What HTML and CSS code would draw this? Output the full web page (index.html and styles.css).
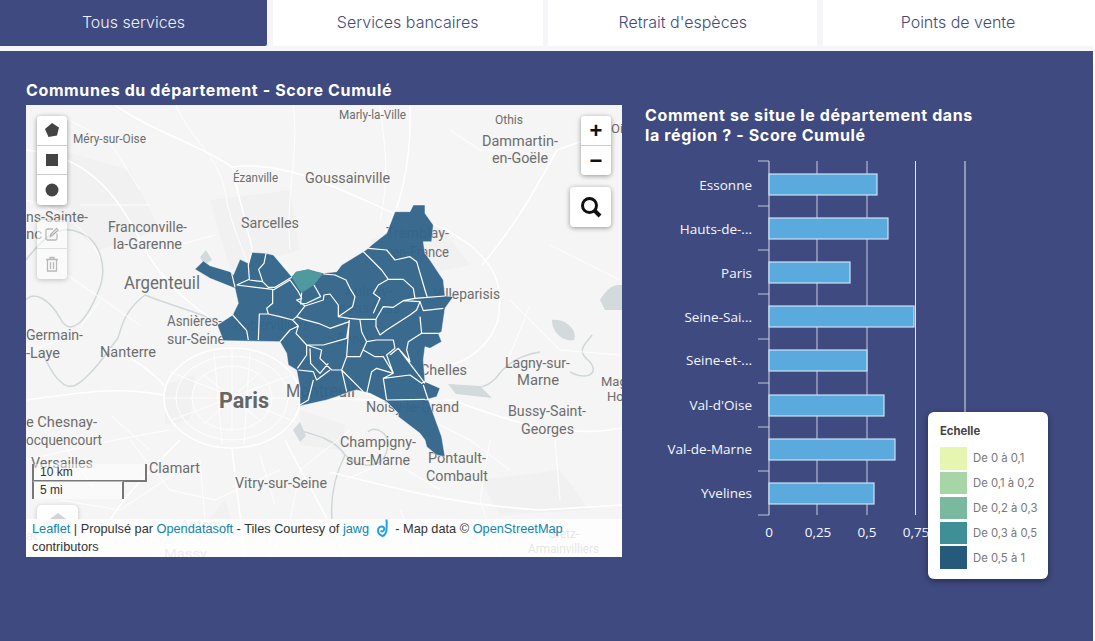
FILE: index.html
```html
<!DOCTYPE html>
<html lang="fr">
<head>
    <meta charset="UTF-8">
    <meta name="viewport" content="width=device-width, initial-scale=1.0">
    <title>Communes du département - Score Cumulé</title>
    <link rel="stylesheet" href="styles.css">
</head>
<body>
    <div class="page">
        <nav class="tabs">
            <a class="tab tab-active">Tous services</a>
            <a class="tab">Services bancaires</a>
            <a class="tab">Retrait d'espèces</a>
            <a class="tab">Points de vente</a>
        </nav>

        <main class="content">
            <section class="map-col">
                <h2 class="title">Communes du département - Score Cumulé</h2>
                <div class="map">
                    <svg class="map-canvas" viewBox="26 105 596 452" width="596" height="452">
                        <!-- zones plus sombres -->
                        <g class="patch">
                            <path d="M60,150 L130,170 L160,230 L100,250 L50,210 Z"/>
                            <path d="M210,200 L290,190 L300,250 L230,270 Z"/>
                            <path d="M370,240 L440,225 L470,265 L400,280 Z"/>
                            <path d="M300,410 L345,425 L340,450 L300,445 Z"/>
                            <path d="M165,385 L195,375 L190,420 L165,425 Z"/>
                            <path d="M480,480 L560,470 L590,510 L500,515 Z"/>
                            <path d="M200,530 L225,500 L240,550 L210,552 Z"/>
                        </g>
                        <!-- eau -->
                        <g class="water">
                            <path d="M26,260 C45,235 60,225 78,232 C102,240 108,270 98,292 C86,322 70,338 60,318 C50,300 34,290 26,300"/>
                            <path d="M145,295 C125,310 122,325 118,338 C105,355 92,375 76,385 C62,392 50,370 42,352"/>
                            <path d="M145,295 C170,305 190,310 215,320"/>
                            <path d="M298,430 C320,436 335,440 345,455 C362,470 385,470 388,445 C388,430 372,426 368,432"/>
                            <path d="M345,455 C335,475 330,495 332,520"/>
                            <path d="M452,385 C470,390 485,390 496,378 C505,365 520,355 540,352"/>
                            <path d="M592,335 C585,345 575,350 590,362 C600,375 585,380 570,372"/>
                        </g>
                        <g class="lake">
                            <path d="M552,320 C565,318 578,330 574,340 C562,342 552,332 552,320 Z"/>
                            <path d="M600,300 C610,283 618,285 622,285 L622,310 L605,310 Z"/>
                            <path d="M448,384 L480,386 L492,398 L456,394 Z"/>
                            <path d="M200,257 L206,250 L212,260 L204,265 Z"/>
                            <path d="M293,430 L300,422 L306,436 L300,442 Z"/>
                        </g>
                        <!-- routes -->
                        <g class="road-main">
                            <ellipse cx="232" cy="398" rx="68" ry="50"/>
                            <path d="M26,150 C90,155 120,200 140,240 C160,280 185,300 215,322"/>
                            <path d="M115,105 C150,130 200,145 232,167 C290,160 340,190 420,225"/>
                            <path d="M232,167 C240,205 255,250 262,300"/>
                            <path d="M410,105 C412,160 400,215 380,240 L330,320 L322,350"/>
                            <path d="M420,225 C435,220 450,232 470,245 C490,262 505,280 498,320 C490,345 470,360 450,365"/>
                            <path d="M482,265 C520,220 540,180 557,150 L600,135 L622,120"/>
                            <path d="M452,400 C500,418 560,440 622,428"/>
                            <path d="M26,400 C70,395 110,385 164,395"/>
                            <path d="M100,345 C130,355 150,370 164,385"/>
                            <path d="M300,400 C345,395 390,405 452,400"/>
                            <path d="M285,440 C305,480 325,510 345,557"/>
                            <path d="M180,440 C140,480 110,510 90,557"/>
                            <path d="M232,448 C235,480 240,510 245,557"/>
                            <path d="M330,472 C400,490 460,505 540,510 L622,505"/>
                        </g>
                        <g class="road">
                            <ellipse cx="232" cy="398" rx="40" ry="32"/>
                            <ellipse cx="232" cy="398" rx="56" ry="42"/>
                            <path d="M232,366 L232,430 M192,398 L272,398 M204,375 L262,422 M260,372 L204,424 M214,352 L222,444 M250,352 L244,444 M170,372 L296,422 M172,420 L294,374"/>
                            <path d="M164,398 L192,398 M272,398 L300,398 M232,348 L232,366"/>
                            <path d="M176,105 C190,140 215,150 225,190 C230,225 240,240 250,270"/>
                            <path d="M293,105 C300,150 285,195 290,250"/>
                            <path d="M60,115 L110,142 L140,190 M26,200 C60,210 85,225 100,258"/>
                            <path d="M60,270 L140,325 M26,352 L75,335 L100,300"/>
                            <path d="M380,105 C385,150 390,175 380,220"/>
                            <path d="M450,130 L480,150 L520,150 M550,245 L620,280"/>
                            <path d="M510,300 L560,350 L620,355 M530,305 L508,360"/>
                            <path d="M490,440 L480,500 L500,557 M555,440 L560,500"/>
                            <path d="M26,460 C70,450 110,440 170,430 M60,500 L120,510 L180,470"/>
                            <path d="M300,470 L290,520 L270,557 M345,480 L390,460 L440,490"/>
                            <path d="M400,510 L420,557 M140,520 L160,557 M26,520 L100,540"/>
                            <path d="M130,440 L170,490 L215,500 L280,470 M200,460 L205,520 M260,455 L275,505 M110,415 L150,450 M60,440 L95,490"/>
                            <path d="M310,350 L345,375 L375,365 M430,420 L470,440 L510,470 M350,430 L300,470 M160,250 L215,235 M80,205 L150,205"/>
                        </g>

                        <!-- villes -->
                        <g class="city">
                            <text x="339" y="119" textLength="67" lengthAdjust="spacingAndGlyphs" class="sm">Marly-la-Ville</text>
                            <text x="495" y="124" textLength="28" lengthAdjust="spacingAndGlyphs" class="sm">Othis</text>
                            <text x="482" y="146" textLength="76" lengthAdjust="spacingAndGlyphs">Dammartin-</text>
                            <text x="492" y="163" textLength="56" lengthAdjust="spacingAndGlyphs">en-Goële</text>
                            <text x="611" y="133" class="sm">Oi</text>
                            <text x="73" y="143" textLength="73" lengthAdjust="spacingAndGlyphs" class="sm">Méry-sur-Oise</text>
                            <text x="233" y="182" textLength="45" lengthAdjust="spacingAndGlyphs" class="sm">Ézanville</text>
                            <text x="305" y="183" textLength="85" lengthAdjust="spacingAndGlyphs">Goussainville</text>
                            <text x="26" y="222" textLength="62" lengthAdjust="spacingAndGlyphs">ns-Sainte-</text>
                            <text x="26" y="239">nc</text>
                            <text x="108" y="232" textLength="79" lengthAdjust="spacingAndGlyphs">Franconville-</text>
                            <text x="113" y="249" textLength="69" lengthAdjust="spacingAndGlyphs">la-Garenne</text>
                            <text x="241" y="228" textLength="58" lengthAdjust="spacingAndGlyphs">Sarcelles</text>
                            <text x="124" y="289" textLength="76" lengthAdjust="spacingAndGlyphs" class="lg">Argenteuil</text>
                            <text x="386" y="238" textLength="63" lengthAdjust="spacingAndGlyphs">Tremblay-</text>
                            <text x="392" y="257" textLength="57" lengthAdjust="spacingAndGlyphs">en-France</text>
                            <text x="345" y="296" textLength="47" lengthAdjust="spacingAndGlyphs">Aulnay-</text>
                            <text x="339" y="313" textLength="61" lengthAdjust="spacingAndGlyphs">sous-Bois</text>
                            <text x="433" y="299" textLength="67" lengthAdjust="spacingAndGlyphs">Villeparisis</text>
                            <text x="167" y="326" textLength="55" lengthAdjust="spacingAndGlyphs">Asnières-</text>
                            <text x="167" y="344" textLength="58" lengthAdjust="spacingAndGlyphs">sur-Seine</text>
                            <text x="233" y="330" textLength="77" lengthAdjust="spacingAndGlyphs">Aubervilliers</text>
                            <text x="26" y="340" textLength="57" lengthAdjust="spacingAndGlyphs">Germain-</text>
                            <text x="26" y="358" textLength="34" lengthAdjust="spacingAndGlyphs">-Laye</text>
                            <text x="100" y="357" textLength="56" lengthAdjust="spacingAndGlyphs">Nanterre</text>
                            <text x="337" y="344" textLength="35" lengthAdjust="spacingAndGlyphs">Bondy</text>
                            <text x="420" y="375" textLength="47" lengthAdjust="spacingAndGlyphs">Chelles</text>
                            <text x="505" y="368" textLength="65" lengthAdjust="spacingAndGlyphs">Lagny-sur-</text>
                            <text x="517" y="385" textLength="42" lengthAdjust="spacingAndGlyphs">Marne</text>
                            <text x="601" y="386" class="sm">Mag</text>
                            <text x="607" y="401" class="sm">Ho</text>
                            <text x="219" y="408" textLength="50" lengthAdjust="spacingAndGlyphs" class="capital">Paris</text>
                            <text x="286" y="397" textLength="69" lengthAdjust="spacingAndGlyphs" class="lg">Montreuil</text>
                            <text x="366" y="412" textLength="93" lengthAdjust="spacingAndGlyphs">Noisy-le-Grand</text>
                            <text x="508" y="416" textLength="78" lengthAdjust="spacingAndGlyphs">Bussy-Saint-</text>
                            <text x="521" y="434" textLength="53" lengthAdjust="spacingAndGlyphs">Georges</text>
                            <text x="26" y="427" textLength="71" lengthAdjust="spacingAndGlyphs">e Chesnay-</text>
                            <text x="26" y="445" textLength="76" lengthAdjust="spacingAndGlyphs">ocquencourt</text>
                            <text x="340" y="447" textLength="76" lengthAdjust="spacingAndGlyphs">Champigny-</text>
                            <text x="346" y="465" textLength="64" lengthAdjust="spacingAndGlyphs">sur-Marne</text>
                            <text x="428" y="463" textLength="58" lengthAdjust="spacingAndGlyphs">Pontault-</text>
                            <text x="426" y="481" textLength="62" lengthAdjust="spacingAndGlyphs">Combault</text>
                            <text x="31" y="468" textLength="62" lengthAdjust="spacingAndGlyphs">Versailles</text>
                            <text x="149" y="473" textLength="51" lengthAdjust="spacingAndGlyphs">Clamart</text>
                            <text x="235" y="488" textLength="92" lengthAdjust="spacingAndGlyphs">Vitry-sur-Seine</text>
                            <text x="180" y="529" textLength="44" lengthAdjust="spacingAndGlyphs" class="faint">Antony</text>
                            <text x="26" y="540" class="faint">ac</text>
                            <text x="164" y="558" textLength="43" lengthAdjust="spacingAndGlyphs" class="faint">Massy</text>
                            <text x="548" y="538" textLength="31" lengthAdjust="spacingAndGlyphs" class="sm">Gretz-</text>
                            <text x="528" y="553" textLength="71" lengthAdjust="spacingAndGlyphs" class="sm">Armainvilliers</text>
                        </g>

                        <!-- communes, tracées à 3x -->
                        <g transform="translate(190,200) scale(0.3333)">
                            <path class="dept" d="M15,208 L40,183 L60,197 L120,215 L130,225 L150,178 L175,190 L185,157 L228,160 L250,165 L305,230 L318,215 L355,208 L400,220 L440,215 L455,195 L520,155 L535,145 L545,135 L590,100 L615,35 L660,35 L670,15 L705,15 L705,40 L730,75 L725,125 L700,125 L705,160 L720,180 L760,240 L765,288 L790,290 L765,325 L755,395 L745,400 L755,425 L720,445 L705,440 L700,480 L705,545 L750,565 L740,590 L705,600 L715,600 L755,710 L765,770 L740,765 L710,740 L705,720 L690,700 L625,650 L625,640 L590,605 L540,580 L500,570 L480,575 L440,590 L410,600 L330,618 L330,565 L320,510 L295,495 L290,460 L270,425 L100,422 L82,375 L128,345 L145,310 L135,265 L60,235 Z"/>
                            <path class="teal" d="M305,232 L318,215 L355,208 L372,215 L400,220 L372,255 L335,278 L325,265 Z"/>
                            <path class="limits" d="M135,262 L125,220 M140,255 L178,238 L175,195 L185,157 M228,160 L222,190 L206,208 L218,245 L178,240 M218,245 L235,262 L255,262 L305,232 M140,255 L248,268 L248,310 L230,325 L235,342 L208,342 L205,420 M250,270 L300,240 L325,275 L335,295 L320,300 L345,318 L320,350 L308,360 L270,350 L235,342 M128,345 L170,392 L175,420 M308,360 L325,378 L300,390 L270,425 M325,378 L318,400 L350,435 L350,465 L322,505 M350,435 L400,435 L470,415 L478,365 M320,350 L340,358 L385,370 L420,385 L478,365 M345,318 L400,300 L402,285 L420,282 L445,315 L445,350 L478,355 M372,255 L392,290 L350,310 L332,312 L335,278 M400,222 L435,225 L468,240 L480,265 L495,290 L488,320 L445,350 M520,155 L575,210 L595,238 M535,145 L590,150 L615,180 L660,170 L680,185 L705,270 L712,292 M595,238 L640,238 L670,265 L675,295 L640,302 L610,322 L580,320 L565,345 L558,358 L510,358 L478,355 M595,238 L565,255 L550,280 L570,295 L550,340 M675,295 L712,292 L765,288 M690,305 L700,332 L760,325 M640,302 L690,305 L680,330 L660,345 L590,390 L570,405 L558,380 L558,358 M690,350 L695,400 L745,400 M695,400 L655,425 L650,450 L660,485 L625,445 L600,465 M510,360 L515,395 L530,425 L510,470 L470,470 L478,360 M470,470 L455,510 L520,575 M530,425 L560,420 L610,420 L615,445 L590,465 L610,520 M520,450 L555,470 L580,470 L610,520 L560,505 L545,515 L530,580 M455,510 L425,510 L390,475 L395,450 L350,435 M455,510 L470,575 M420,510 L380,540 L370,515 L325,510 M360,445 L362,490 L390,520 L415,490 M370,540 L355,600 L330,615 M610,520 L580,535 L590,600 M580,535 L660,525 L695,550 L705,545 M625,445 L705,550 M590,600 L705,598 M700,555 L715,600 M530,580 L575,600"/>
                        </g>
                    </svg>

                    <div class="rail-left">
                        <div class="ctrl">
                            <button class="ctrl-btn">
                                <svg width="16" height="16" viewBox="0 0 16 16"><path class="ico" d="M8,1 L15,5.5 L13,13.5 L4.5,15 L1,7 Z"/></svg>
                            </button>
                            <button class="ctrl-btn">
                                <svg width="16" height="16" viewBox="0 0 16 16"><rect class="ico" x="2" y="2" width="12" height="12"/></svg>
                            </button>
                            <button class="ctrl-btn">
                                <svg width="16" height="16" viewBox="0 0 16 16"><circle class="ico" cx="8" cy="8" r="6.5"/></svg>
                            </button>
                        </div>
                        <div class="ctrl ctrl-off">
                            <button class="ctrl-btn">
                                <svg width="16" height="16" viewBox="0 0 16 16"><path class="ico-line" d="M9,3 L3.5,3 Q2,3 2,4.5 L2,12.5 Q2,14 3.5,14 L11.5,14 Q13,14 13,12.5 L13,7.5 M6.5,10.5 L7,8 L12.5,2.5 L14,4 L8.5,9.5 Z"/></svg>
                            </button>
                            <button class="ctrl-btn">
                                <svg width="16" height="16" viewBox="0 0 16 16"><path class="ico-line" d="M2,3.5 L14,3.5 M6,3.5 L6,1.5 L10,1.5 L10,3.5 M3.5,3.5 L3.5,15 L12.5,15 L12.5,3.5 M6.5,6 L6.5,13 M9.5,6 L9.5,13"/></svg>
                            </button>
                        </div>
                    </div>

                    <div class="rail-right">
                        <div class="ctrl">
                            <button class="ctrl-btn zoom-btn">+</button>
                            <button class="ctrl-btn zoom-btn">−</button>
                        </div>
                        <button class="search-btn">
                            <svg width="24" height="24" viewBox="0 0 24 24"><circle cx="10.5" cy="10.5" r="7" class="search-ico"/><path d="M15.5,15.5 L21,21" class="search-ico search-handle"/></svg>
                        </button>
                    </div>

                    <div class="scale">
                        <div class="scale-line scale-km">10 km</div>
                        <div class="scale-line scale-mi">5 mi</div>
                    </div>

                    <div class="layers">
                        <svg width="34" height="28" viewBox="0 0 34 28"><path d="M17,2 L32,13 L17,24 L2,13 Z" class="layers-ico"/></svg>
                    </div>

                    <div class="attribution">
                        <a>Leaflet</a> | Propulsé par <a>Opendatasoft</a> - Tiles Courtesy of <a>jawg</a>
                        <svg class="jawg" width="12" height="18" viewBox="0 0 12 18"><path d="M9.5,0.5 C10,5 9.5,9 9.5,11 C9.5,14 7,17 5.5,17 C3,16 1,13.5 1,11.5 C1,9 3,7.5 5,7.5 C7,7.5 7.5,9.5 7,11 C6.5,12.5 4.5,13 3.8,11.5"/></svg>
                        - Map data © <a>OpenStreetMap</a> contributors
                    </div>
                </div>
            </section>

            <section class="chart-col">
                <h2 class="title chart-title">Comment se situe le département dans la région ? - Score Cumulé</h2>
                <div class="chart">
                    <svg viewBox="645 155 340 395" width="340" height="395">
                        <g class="grid">
                            <path d="M817,161 V515 M867,161 V515"/>
                            <path class="grid-strong" d="M915.5,161 V515 M965,161 V515"/>
                        </g>
                        <path class="axis" d="M769,161 V515 M758,161 H769 M758,206 H769 M758,250 H769 M758,294 H769 M758,339 H769 M758,383 H769 M758,427 H769 M758,471 H769 M758,515 H769"/>
                        <g class="bars">
                            <rect x="769" y="174" width="108" height="21"/>
                            <rect x="769" y="218" width="119" height="21"/>
                            <rect x="769" y="262" width="81" height="21"/>
                            <rect x="769" y="306" width="145" height="21"/>
                            <rect x="769" y="350" width="98" height="21"/>
                            <rect x="769" y="395" width="115" height="21"/>
                            <rect x="769" y="439" width="126" height="21"/>
                            <rect x="769" y="483" width="105" height="21"/>
                        </g>
                        <g class="cat">
                            <text x="752" y="190">Essonne</text>
                            <text x="752" y="234">Hauts-de-...</text>
                            <text x="752" y="278">Paris</text>
                            <text x="752" y="322">Seine-Sai...</text>
                            <text x="752" y="365">Seine-et-...</text>
                            <text x="752" y="410">Val-d'Oise</text>
                            <text x="752" y="454">Val-de-Marne</text>
                            <text x="752" y="498">Yvelines</text>
                        </g>
                        <g class="val">
                            <text x="769" y="537">0</text>
                            <text x="818" y="537">0,25</text>
                            <text x="867" y="537">0,5</text>
                            <text x="916" y="537">0,75</text>
                        </g>
                    </svg>
                    <div class="legend">
                        <div class="legend-title">Echelle</div>
                        <div class="legend-row"><span class="swatch s1"></span>De 0 à 0,1</div>
                        <div class="legend-row"><span class="swatch s2"></span>De 0,1 à 0,2</div>
                        <div class="legend-row"><span class="swatch s3"></span>De 0,2 à 0,3</div>
                        <div class="legend-row"><span class="swatch s4"></span>De 0,3 à 0,5</div>
                        <div class="legend-row"><span class="swatch s5"></span>De 0,5 à 1</div>
                    </div>
                </div>
            </section>
        </main>
    </div>
</body>
</html>
```

FILE: styles.css
```css
html, body {
    margin: 0;
    padding: 0;
    height: 100%;
    overflow: hidden;
    background: white;
    font-family: 'Inter', 'Open Sans', sans-serif;
}

.page {
    width: 1093px;
    height: 641px;
    display: flex;
    flex-direction: column;
    background: #3f4a80;
}

.tabs {
    display: grid;
    grid-template-columns: 267px 270px 269px 270px;
    column-gap: 5.67px;
    height: 46px;
    padding-bottom: 5px;
    background: #f6f6f8;
}

.tab {
    display: flex;
    align-items: center;
    justify-content: center;
    background: white;
    color: #3f4a80;
    font-size: 16px;
    font-weight: 300;
    padding-bottom: 3px;
}

.tab-active {
    background: #3f4a80;
    color: #eef0f8;
    border-radius: 0 0 2px 0;
}

.content {
    flex: 1;
    display: flex;
    gap: 23px;
    padding: 29px 26px 0;
}

.map-col {
    width: 596px;
}

.title {
    margin: 0;
    color: white;
    font-size: 16px;
    line-height: 20px;
    font-weight: 700;
    letter-spacing: 0.62px;
}

.map {
    position: relative;
    margin-top: 5px;
    width: 596px;
    height: 452px;
    overflow: hidden;
    background: #f5f5f5;
}

.map-canvas {
    display: block;
}

.patch path {
    fill: #f1f1f1;
}

.water path {
    fill: none;
    stroke: #d0d7d9;
    stroke-width: 1.5;
}

.lake path {
    fill: #d3dadc;
}

.road-main ellipse, .road-main path {
    fill: none;
    stroke: white;
    stroke-width: 1.6;
}

.road ellipse, .road path {
    fill: none;
    stroke: white;
    stroke-width: 0.9;
}

.city text {
    font-family: 'Roboto', sans-serif;
    font-size: 15px;
    fill: #6d6d6d;
}

.city .sm {
    font-size: 13px;
}

.city .lg {
    font-size: 18px;
}

.city .faint {
    font-size: 13px;
    fill: #999;
}

.city .capital {
    font-size: 22px;
    font-weight: 700;
    fill: #666;
}

.dept {
    fill: #32658a;
    fill-opacity: 0.96;
    stroke: white;
    stroke-opacity: 0.7;
    stroke-width: 2;
}

.teal {
    fill: #4f9a9e;
}

.limits {
    fill: none;
    stroke: white;
    stroke-width: 3.6;
    stroke-linejoin: round;
}

.rail-left {
    position: absolute;
    top: 11px;
    left: 11px;
    display: flex;
    flex-direction: column;
    gap: 15px;
}

.rail-right {
    position: absolute;
    top: 11px;
    right: 11px;
    display: flex;
    flex-direction: column;
    align-items: flex-end;
    gap: 12px;
}

.ctrl {
    display: flex;
    flex-direction: column;
    width: 30px;
    background: white;
    border-radius: 4px;
    box-shadow: 0 1px 5px rgba(0,0,0,0.4);
    overflow: hidden;
}

.ctrl-off {
    opacity: 0.55;
}

.ctrl-btn {
    display: flex;
    align-items: center;
    justify-content: center;
    width: 30px;
    height: 29.5px;
    padding: 0;
    border: none;
    border-bottom: 1px solid #ccc;
    background: white;
}

.ctrl-btn:last-child {
    border-bottom: none;
}

.ico {
    fill: #444;
}

.ico-line {
    fill: none;
    stroke: #888;
    stroke-width: 1.3;
}

.zoom-btn {
    font-family: 'Liberation Sans', sans-serif;
    font-size: 22px;
    font-weight: 700;
    color: #111;
    line-height: 1;
    padding-top: 2px;
}

.search-btn {
    display: flex;
    align-items: center;
    justify-content: center;
    width: 41px;
    height: 40px;
    padding: 0;
    border: none;
    border-radius: 4px;
    background: white;
    box-shadow: 0 1px 5px rgba(0,0,0,0.4);
}

.search-ico {
    fill: none;
    stroke: #111;
    stroke-width: 3;
}

.search-handle {
    stroke-width: 4;
}

.scale {
    position: absolute;
    left: 6px;
    top: 359px;
    font-family: 'Liberation Sans', sans-serif;
    font-size: 12px;
    color: #333;
}

.scale-line {
    box-sizing: border-box;
    height: 18px;
    line-height: 17px;
    padding-left: 6px;
    border: 2px solid #777;
    background: rgba(255,255,255,0.5);
}

.scale-km {
    width: 115px;
    border-top: none;
}

.scale-mi {
    width: 92px;
    margin-top: -1px;
    border-top: none;
    border-bottom: none;
    border-top: 1px solid transparent;
}

.layers {
    position: absolute;
    left: 11px;
    top: 400px;
    display: flex;
    justify-content: center;
    padding-top: 6px;
    width: 41px;
    height: 40px;
    box-sizing: border-box;
    background: white;
    border-radius: 5px;
    box-shadow: 0 1px 5px rgba(0,0,0,0.2);
}

.layers-ico {
    fill: #d4d4d4;
}

.attribution {
    position: absolute;
    left: 0;
    right: 0;
    bottom: 0;
    height: 38px;
    box-sizing: border-box;
    padding: 0 50px 0 6px;
    background: rgba(255,255,255,0.82);
    font-family: 'Liberation Sans', sans-serif;
    font-size: 12.75px;
    line-height: 18px;
    color: #333;
}

.attribution a {
    color: #0f84b0;
}

.jawg {
    vertical-align: -4px;
    margin: 0 3px 0 4px;
}

.jawg path {
    fill: none;
    stroke: #1ea0e6;
    stroke-width: 2;
}

.chart-col {
    position: relative;
    width: 340px;
    padding-top: 25px;
}

.chart-title {
    width: 335px;
}

.chart {
    position: relative;
    margin-top: 10px;
}

.chart svg {
    display: block;
    overflow: visible;
}

.grid path {
    fill: none;
    stroke: rgba(255,255,255,0.72);
    stroke-width: 1;
}

.grid .grid-strong {
    stroke: rgba(255,255,255,0.85);
}

.axis {
    fill: none;
    stroke: #c2c6d8;
    stroke-width: 1.2;
}

.bars rect {
    fill: #5aaadd;
    stroke: #cbe3f4;
    stroke-width: 1.2;
}

.cat text, .val text {
    font-family: 'Open Sans', sans-serif;
    font-size: 13.5px;
    fill: #f6f7fc;
}

.cat text {
    text-anchor: end;
}

.val text {
    text-anchor: middle;
}

.legend {
    position: absolute;
    left: 283px;
    top: 257px;
    box-sizing: border-box;
    width: 120px;
    height: 167px;
    padding: 12px 0 0 12px;
    background: white;
    border-radius: 6px;
    box-shadow: 0 2px 6px rgba(0,0,0,0.4);
    color: #777;
    font-size: 11.3px;
}

.legend-title {
    font-weight: 700;
    color: #444;
    line-height: 14px;
    margin-bottom: 8px;
}

.legend-row {
    display: flex;
    align-items: center;
    gap: 6px;
    height: 24.8px;
}

.swatch {
    width: 27px;
    height: 22.5px;
}

.s1 { background: #e6f5b0; }
.s2 { background: #a8d5a5; }
.s3 { background: #7ab8a0; }
.s4 { background: #3f8f96; }
.s5 { background: #255a7a; }
```
